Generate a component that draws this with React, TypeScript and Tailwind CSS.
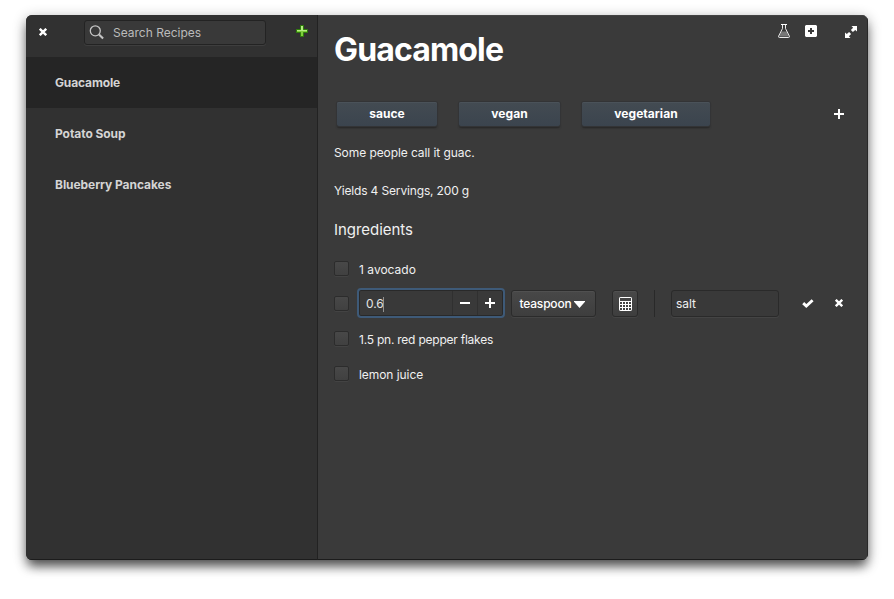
import React from "react";

const RECIPES = ["Guacamole", "Potato Soup", "Blueberry Pancakes"];

function CloseIcon() {
  return (
    <svg width="8" height="8" viewBox="0 0 8 8" className="block">
      <path d="M.8.8 7.200 7.200M7.200.8.8 7.200" stroke="#fff" strokeWidth="2.4" />
    </svg>
  );
}

function SearchIcon() {
  return (
    <svg width="16" height="16" viewBox="0 0 16 16" className="block shrink-0" fill="none" stroke="#c4c4c4">
      <circle cx="6.3" cy="5.8" r="5" strokeWidth="1.3" />
      <path d="M10 9.5 14.1 13.600" strokeWidth="2.1" />
    </svg>
  );
}

function GreenPlus() {
  return (
    <svg width="12" height="12" viewBox="0 0 12 12" className="block">
      <path d="M4.5.5h3v4h4v3h-4v4h-3v-4h-4v-3h4z" fill="#7fcf3c" stroke="#2f7d0c" />
      <path d="M5 1h2v4h4v1H1V5h4z" fill="#b5ec83" />
    </svg>
  );
}

function PlusIcon() {
  return (
    <svg width="10" height="10" viewBox="0 0 10 10" className="block">
      <path d="M4 0h2v4h4v2H6v4H4V6H0V4h4z" fill="#fff" />
    </svg>
  );
}

function MinusIcon() {
  return (
    <svg width="10" height="10" viewBox="0 0 10 10" className="block">
      <path d="M0 4h10v2H0z" fill="#fff" />
    </svg>
  );
}

function FlaskIcon() {
  return (
    <svg width="12" height="14" viewBox="0 0 12 14" className="block" fill="none" stroke="#fff">
      <path d="M3.4 7.5h5.2l2.2 5H1.2z" fill="#777" stroke="none" />
      <path d="M3 .5h6" />
      <path d="M4.5.5v4L.6 12.2q-.3 1.3.9 1.3h9q1.2 0 .9-1.3L7.500 4.500v-4" strokeWidth=".9" />
    </svg>
  );
}

function AddBoxIcon() {
  return (
    <svg width="12" height="12" viewBox="0 0 12 12" className="block">
      <path fillRule="evenodd" d="M1 0h10l1 1v10l-1 1H1l-1-1V1zM5 3v2H3v2h2v2h2V7h2V5H7V3z" fill="#fff" />
    </svg>
  );
}

function ExpandIcon() {
  return (
    <svg width="12" height="12" viewBox="0 0 12 12" className="block" fill="#fff">
      <path d="M6.500 0H12v5.500L10.200 3.900 7.900 6.100 5.900 4.100 8.100 1.800z" />
      <path d="M5.500 12H0V6.500L1.800 8.100 4.100 5.900 6.100 7.900 3.900 10.200z" />
    </svg>
  );
}

function CalculatorIcon() {
  return (
    <svg width="13" height="14" viewBox="0 0 13 14" className="block" fill="none" stroke="#fff">
      <rect x=".5" y=".5" width="12" height="13" rx=".6" />
      <path d="M1 4.500h11M1 7.500h11M1 10.500h11M3.500 4.500v9M6.500 4.500v9M9.500 4.500v9" />
    </svg>
  );
}

function CheckIcon() {
  return (
    <svg width="12" height="9" viewBox="0 0 12 9" className="block">
      <path d="M1.200 4.200 4.300 7 10.600 1.200" stroke="#fff" strokeWidth="2.900" fill="none" />
    </svg>
  );
}

function Checkbox() {
  return (
    <span className="block size-[15px] shrink-0 rounded-[2px] border border-[#2c2c2c] bg-linear-to-b from-[#484848] to-[#404040] shadow-[0_1px_0_#434343]" />
  );
}

function Ingredient({ text, className }: { text: string; className: string }) {
  return (
    <label className={`flex h-[15px] items-center gap-[10px] ${className}`}>
      <Checkbox />
      <span className="relative top-px whitespace-nowrap">{text}</span>
    </label>
  );
}

function Tag({ label, className }: { label: string; className: string }) {
  return (
    <span
      className={`flex h-6 items-center justify-center rounded-[2px] bg-linear-to-b from-[#434b52] to-[#3b444e] font-bold tracking-[0.04px] text-white shadow-[0_0_0_1px_#333436,inset_0_1px_0_#4a5259,0_2px_2px_#252525] ${className}`}
    >
      {label}
    </span>
  );
}

const BUTTON =
  "mt-px flex h-[27px] items-center justify-center rounded-[3px] border border-[#2b2b2b] bg-linear-to-b from-[#484848] to-[#3e3e3e] shadow-[inset_0_1px_0_#505050,0_1px_0_#444]";

export default function App() {
  return (
    <div className="flex h-[599px] w-[894px] overflow-hidden bg-white pt-[15px] pl-[26px] font-['Inter',sans-serif] text-[12px] leading-4 tracking-[-0.06px] text-[#f0f0f0]">
      <div className="flex h-[545px] w-[842px] overflow-hidden rounded-[6px] bg-[#3a3a3a] shadow-[0_8px_11px_-2px_#00000098,0_3px_14px_#00000050]">
        <aside className="flex w-[292px] shrink-0 flex-col border-r border-b border-r-[#222] border-b-[#1c1c1c] bg-[#313131]">
          <header className="flex h-[42px] items-start pt-[5px] pl-[13px]">
            <button className="mt-[8px]"><CloseIcon /></button>
            <div className="ml-[37px] flex h-[25px] w-[182px] items-center gap-2 rounded-[3px] border border-[#232323] bg-[#393939] pl-[4px] text-[#bbb] shadow-[0_1px_0_#3e3e3e]">
              <SearchIcon />
              <span className="tracking-[0]">Search Recipes</span>
            </div>
            <button className="mt-[5px] ml-[30px]"><GreenPlus /></button>
          </header>
          <nav>
            {RECIPES.map((name, i) => (
              <div
                key={name}
                className={`flex h-[51px] items-center pl-[29px] font-bold text-[#d4d4d4] ${i === 0 ? "bg-[#252525] tracking-[-0.14px]" : ""}`}
              >
                {name}
              </div>
            ))}
          </nav>
        </aside>

        <main className="flex flex-1 flex-col border-r border-b border-r-[#282828] border-b-[#1c1c1c] pl-4 shadow-[inset_0_1px_0_#434343]">
          <div className="flex h-[87px] items-start">
            <h1 className="mt-[15px] w-[443px] text-[32px] leading-10 font-bold tracking-[-0.85px] text-white">Guacamole</h1>
            <button className="mt-[9px] ml-[1px]"><FlaskIcon /></button>
            <button className="mt-[10px] ml-[15px]"><AddBoxIcon /></button>
            <button className="mt-[11px] ml-[28px]"><ExpandIcon /></button>
          </div>

          <div className="flex h-6 items-center pl-[3px]">
            <Tag label="sauce" className="w-[100px]" />
            <Tag label="vegan" className="ml-[22px] w-[101px]" />
            <Tag label="vegetarian" className="ml-[22px] w-[128px]" />
            <button className="ml-[124px]"><PlusIcon /></button>
          </div>

          <p className="mt-[19px] tracking-[-0.08px]">Some people call it guac.</p>
          <p className="mt-[22px] tracking-[-0.15px]">Yields 4 Servings, 200 g</p>
          <h2 className="mt-[21px] text-[15px] leading-5 tracking-[-0.04px]">Ingredients</h2>

          <Ingredient text="1 avocado" className="mt-[21px] tracking-[0.02px]" />

          <div className="mt-[12px] flex h-[30px] items-center">
            <Checkbox />
            <div className="ml-[8px] flex h-[30px] w-[148px] rounded-[4px] border-2 border-[#3e5a78] bg-[#393939] shadow-[inset_0_0_0_1px_#292929]">
              <div className="flex w-[93px] items-center pt-[2px] pl-[7px] text-[#e4e4e4]">
                0.6<span className="-ml-px block h-[15px] w-px bg-[#909090]" />
              </div>
              <button className="my-px flex w-[25px] items-center justify-center border-l border-[#303030]"><MinusIcon /></button>
              <button className="my-px flex w-[25px] items-center justify-center border-l border-[#303030]"><PlusIcon /></button>
            </div>
            <button className={`${BUTTON} ml-[6px] w-[85px] gap-[3px] pr-[2px] font-medium tracking-[-0.2px] text-white`}>
              teaspoon
              <svg width="11" height="7" viewBox="0 0 11 7" className="mt-px block"><path d="M0 0h11v.8L5.500 7 0 .8z" fill="#fff" /></svg>
            </button>
            <button className={`${BUTTON} ml-[16px] w-[26px] pt-px pl-px`}><CalculatorIcon /></button>
            <span className="mt-px ml-[16px] h-[27px] w-px bg-[#292929]" />
            <div className="mt-px ml-[16px] flex h-[27px] w-[108px] items-center rounded-[3px] border border-[#2a2a2a] bg-[#393939] pl-[4px] shadow-[0_1px_0_#444]">
              salt
            </div>
            <button className="ml-[23px]"><CheckIcon /></button>
            <button className="ml-[21px]"><CloseIcon /></button>
          </div>

          <Ingredient text="1.5 pn. red pepper flakes" className="mt-[13px] tracking-[-0.23px]" />
          <Ingredient text="lemon juice" className="mt-[20px]" />
        </main>
      </div>
    </div>
  );
}
